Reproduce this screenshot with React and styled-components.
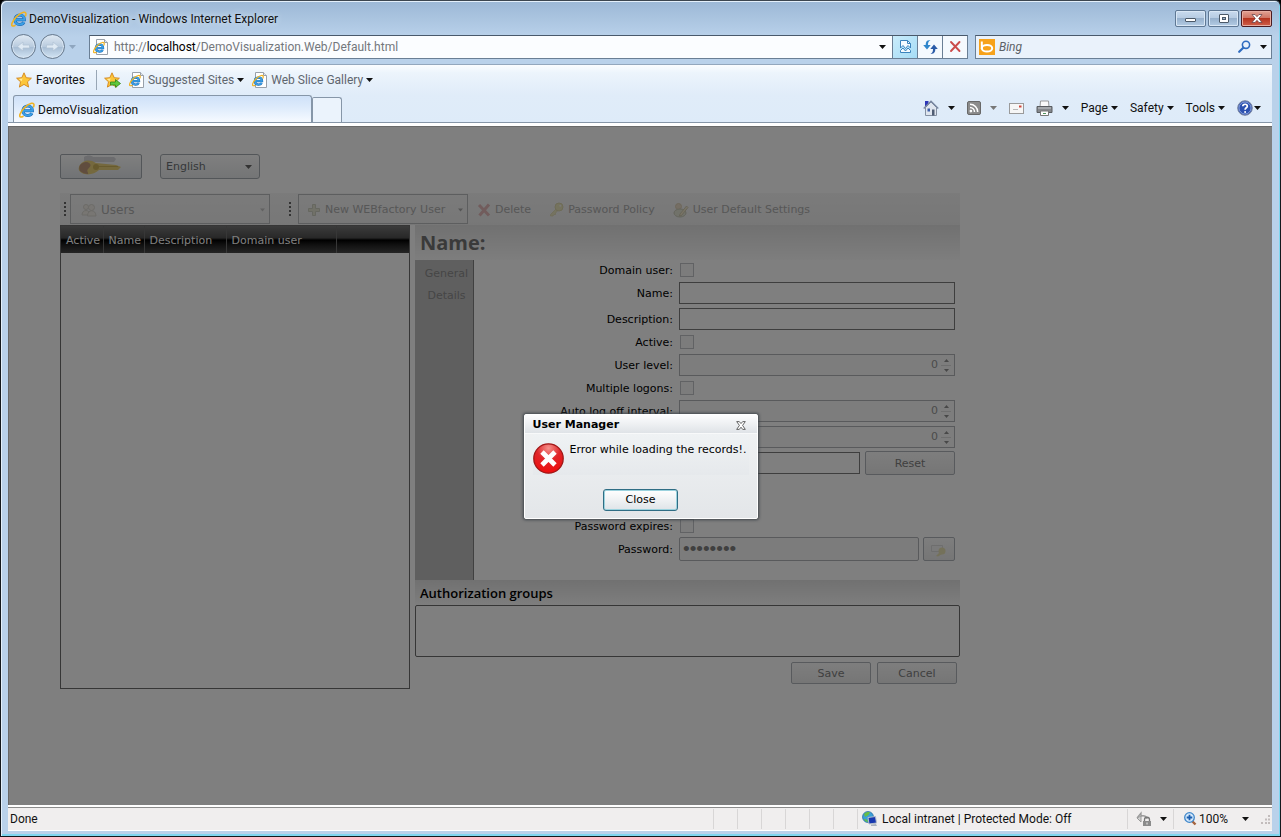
import React, { useState } from 'react';
import styled, { createGlobalStyle, css } from 'styled-components';

const GlobalStyle = createGlobalStyle`
    * {
        box-sizing: border-box;
    }
    body {
        margin: 0;
        background: #000;
    }
    button, input, select {
        font: inherit;
        color: inherit;
        margin: 0;
        padding: 0;
    }
    a {
        color: inherit;
        text-decoration: none;
    }
`;

const appFont = '"DejaVu Sans", Verdana, sans-serif';
const headingFont = '"Open Sans", "Trebuchet MS", sans-serif';

/* ---------- browser window ---------- */

const BrowserWindow = styled.div`
    display: flex;
    flex-direction: column;
    min-height: 100vh;
    padding: 0 8px 6px 7px;
    border: 1px solid #14181d;
    border-top-color: #3c4650;
    border-radius: 6px 6px 0 0;
    background: linear-gradient(#9cb8d6 0, #b9d1ea 36px, #b9d1ea 100%);
    box-shadow: inset 1px 1px 0 #e4f0fb, inset -1px -2px 0 #7fd6ee;
    font: 12px/16px Roboto, "Segoe UI", sans-serif;
    color: #111;
`;

const TitleBar = styled.header`
    display: flex;
    align-items: center;
    gap: 2px;
    height: 32px;
    padding: 3px 0 0 3px;
`;

const TitleText = styled.span`
    flex: 1;
    text-shadow: 0 0 6px #e8f2fc;
`;

const WindowButton = styled.button`
    display: flex;
    align-items: center;
    justify-content: center;
    width: 31px;
    height: 17px;
    border: 1px solid #5f7894;
    border-radius: 2px;
    background: linear-gradient(#c9dbee 0, #b6cbe2 48%, #97b1cd 50%, #b4cce4 100%);
    box-shadow: inset 0 0 0 1px #d9e7f5;

    ${({ $close }) => $close && css`
        border-color: #4b1b20;
        background: linear-gradient(#e2a395 0, #cf7262 48%, #b5341f 50%, #d0604a 100%);
        box-shadow: inset 0 0 0 1px #e7aca0;
    `}
`;

const AddressRow = styled.div`
    display: flex;
    align-items: center;
    height: 31px;
    padding: 0 0 4px 3px;
`;

const NavButton = styled.button`
    display: flex;
    align-items: center;
    justify-content: center;
    width: 25px;
    height: 25px;
    margin-right: 4px;
    border: 1px solid #66788c;
    border-radius: 50%;
    background: linear-gradient(#dfe9f3 0, #b9cbde 50%, #a6bcd3 52%, #d2e4f4 100%);
    box-shadow: inset 0 0 0 1px #d8e5f2;
`;

const PlainButton = styled.button`
    display: inline-flex;
    align-items: center;
    justify-content: center;
    gap: 3px;
    border: 0;
    background: none;
`;

const AddressBox = styled.div`
    display: flex;
    flex: 1;
    align-items: center;
    height: 24px;
    margin: 0 7px 0 13px;
    padding-left: 3px;
    border: 1px solid #6a7f95;
    border-top-color: #49596b;
    background: #fbfdff;
`;

const Url = styled.a`
    flex: 1;
    padding-left: 5px;
    color: #73777c;

    b {
        color: #000;
        font-weight: 400;
    }
`;

const AddressButton = styled.button`
    display: flex;
    align-items: center;
    justify-content: center;
    width: 25px;
    height: 22px;
    border: 0;
    border-left: 1px solid #6a7f95;
    background: ${({ $active }) => ($active ? 'linear-gradient(135deg, #c9ecfb, #a5dcf6)' : '#f4f9fe')};
`;

const HistoryButton = styled(PlainButton)`
    width: 20px;
`;

const SearchBox = styled.label`
    display: flex;
    flex: 0 1 297px;
    align-items: center;
    gap: 4px;
    height: 24px;
    padding: 0 4px 0 3px;
    border: 1px solid #6a7f95;
    border-top-color: #49596b;
    background: #eaf2fb;
`;

const SearchInput = styled.input`
    flex: 1;
    min-width: 0;
    border: 0;
    outline: 0;
    background: none;

    &::placeholder {
        color: #5c6166;
        font-style: italic;
        opacity: 1;
    }
`;

const SearchMenu = styled(PlainButton)`
    margin-left: 5px;
`;

const Bars = styled.div`
    border-top: 1px solid #93a7bd;
    background: linear-gradient(#fbfdff 0, #ecf4fc 8px, #e0ecf9 30px, #deebf9 100%);
`;

const FavoritesBar = styled.nav`
    display: flex;
    align-items: center;
    height: 30px;
    padding: 0 0 0 8px;
    color: #5f666e;
`;

const FavLink = styled.a`
    display: flex;
    align-items: center;
    gap: 3px;
    margin-right: 8px;
`;

const FavoritesButton = styled(PlainButton)`
    height: 20px;
    padding-right: 11px;
    margin-right: 7px;
    border-right: 1px solid #98a6b5;
    color: #111;
`;

const TabRow = styled.div`
    display: flex;
    align-items: flex-end;
    justify-content: space-between;
    height: 28px;
    padding-left: 5px;
    border-bottom: 1px solid #8696a8;
`;

const Tabs = styled.div`
    display: flex;
    flex: 1;
    align-items: flex-end;
    min-width: 0;
    height: 28px;
`;

const Tab = styled.button`
    display: flex;
    flex: 0 1 299px;
    align-items: center;
    gap: 3px;
    height: 27px;
    padding: 2px 5px 0;
    border: 1px solid #8696a8;
    border-bottom: 0;
    border-radius: 3px 3px 0 0;
    background: linear-gradient(#cfe1f8, #dceafb 40%, #f6faff);
`;

const NewTab = styled.button`
    width: 30px;
    height: 25px;
    border: 1px solid #8696a8;
    border-bottom: 0;
    border-radius: 2px 3px 0 0;
    background: #ebf3fc;
`;

const CommandBar = styled.div`
    display: flex;
    align-items: center;
    gap: 12px;
    height: 28px;
    padding-right: 11px;
`;

const IconMenu = styled(PlainButton)`
    gap: 9px;
`;

const HelpMenu = styled(PlainButton)`
    gap: 1px;
`;

/* ---------- page ---------- */

const Page = styled.main`
    position: relative;
    flex: 1;
    margin-top: 3px;
    padding: 26px 51px 40px;
    border: 1px solid #696969;
    border-width: 1px 0 0 1px;
    background: #fff;
    font: 11px/14px ${appFont};
    color: #000;
    box-shadow: 0 -3px 0 #fff;
`;

const Manager = styled.div`
    width: 100%;
    max-width: 900px;
`;

const TopControls = styled.div`
    display: flex;
    align-items: center;
    gap: 18px;
    height: 26px;
    margin-bottom: 14px;
`;

const KeyButton = styled.button`
    display: flex;
    justify-content: center;
    width: 82px;
    height: 25px;
    border: 1px solid #a6adb2;
    border-radius: 2px;
    background: linear-gradient(#fff, #e2e6ea);
`;

const SelectBox = styled.div`
    position: relative;

    svg {
        position: absolute;
        top: 11px;
        right: 8px;
        pointer-events: none;
    }
`;

const LanguageSelect = styled.select`
    appearance: none;
    width: 100px;
    height: 25px;
    padding: 1px 5px 0;
    border: 1px solid #a6adb2;
    border-radius: 3px;
    background: linear-gradient(#fff, #e8eaec);
    color: #6c7174;
`;

const ToolBar = styled.div`
    display: flex;
    align-items: center;
    height: 32px;
    background: linear-gradient(#f6f6f6, #efefef);
    color: #aeaeae;
`;

const ToolGrip = styled.span`
    width: 2px;
    height: 14px;
    margin: 0 ${({ $wide }) => ($wide ? '7px' : '4px')} 0 4px;
    background: repeating-linear-gradient(#666 0, #666 2px, transparent 2px, transparent 4px);
`;

const ToolDropdown = styled.button`
    display: flex;
    align-items: center;
    gap: 4px;
    width: ${({ $width }) => $width};
    height: 30px;
    padding: 1px 4px 0 ${({ $inset }) => $inset || '8px'};
    border: 1px solid #bbbdbf;
    background: none;
    font-size: ${({ $large }) => ($large ? '12px' : '11px')};

    span {
        flex: 1;
        text-align: left;
        white-space: nowrap;
    }
`;

const ToolGap = styled.span`
    width: 15px;
`;

const ToolButton = styled.button`
    display: flex;
    align-items: center;
    gap: 4px;
    margin-left: 9px;
    padding: 1px 9px 0 0;
    border: 0;
    background: none;
    white-space: nowrap;
`;

const Workspace = styled.div`
    display: grid;
    grid-template-columns: 350px 1fr;
    gap: 5px;
`;

const UserList = styled.section`
    min-height: 464px;
    border: 1px solid #6c6c6c;
    background: #fff;
`;

const UserTable = styled.table`
    width: 100%;
    table-layout: fixed;
    border-collapse: collapse;

    th {
        height: 27px;
        padding: 2px 0 0 5px;
        border: solid #6f6f6f;
        border-width: 0 1px 0 0;
        color: #fff;
        font-weight: 400;
        text-align: left;
        white-space: nowrap;
    }
    th:last-child {
        border-right: 0;
    }
    thead {
        background: linear-gradient(#777 0, #505050 44%, #000 52%, #222 70%, #4a4a4a 100%);
    }
`;

const Details = styled.section`
    display: flex;
    flex-direction: column;
    min-width: 0;
`;

const NameHeading = styled.h1`
    height: 35px;
    margin: 0;
    padding: 0 5px;
    background: linear-gradient(#e2e2e2, #fcfcfc);
    color: #757575;
    font: 700 20px/35px ${headingFont};
`;

const GroupHeading = styled.h2`
    height: 25px;
    margin: 0;
    padding: 2px 5px 0;
    background: linear-gradient(#e2e2e2, #fcfcfc);
    font: 600 13px/23px ${headingFont};
`;

const DetailsBody = styled.div`
    display: flex;
    min-height: 320px;
`;

const SideTabs = styled.nav`
    display: flex;
    flex-direction: column;
    width: 59px;
    padding-top: 3px;
    border-right: 1px solid #808080;
    background: #bfbfbf;
`;

const SideTab = styled.button`
    height: 22px;
    padding-left: 5px;
    border: 0;
    background: none;
    color: #8c8c8c;
`;

const Form = styled.form`
    flex: 1;
    min-width: 0;
    padding-right: 5px;
`;

const FormRow = styled.div`
    display: flex;
    align-items: center;
    height: ${({ $check }) => ($check ? '20px' : '26px')};
    margin-top: ${({ $spaced }) => ($spaced ? '40px' : '0')};
`;

const RowLabel = styled.label`
    width: 199px;
    margin-right: 6px;
    padding-top: 1px;
    text-align: right;
    white-space: nowrap;
`;

const CheckBox = styled.input`
    appearance: none;
    width: 14px;
    height: 14px;
    margin-left: 1px;
    border: 1px solid #c2c5c8;
    background: #f8f8f8;
`;

const TextBox = styled.input`
    flex: 1;
    min-width: 0;
    height: ${({ $soft }) => ($soft ? '24px' : '22px')};
    padding: 0 3px;
    border: 1px solid ${({ $soft }) => ($soft ? '#b2b5b8' : '#7c7c7c')};
    border-radius: ${({ $soft }) => ($soft ? '2px' : '0')};
    background: ${({ $soft }) => ($soft ? '#f8f8f8' : '#fff')};
    color: #000;
    outline: 0;

    &[type='password'] {
        color: #808080;
        font: 19px "Liberation Sans", Arial, sans-serif;
    }
`;

const SpinBox = styled.div`
    display: flex;
    flex: 1;
    align-items: center;
    height: 22px;
    padding-right: 3px;
    border: 1px solid #b2b5b8;
    background: #fbfbfb;
`;

const SpinInput = styled.input`
    flex: 1;
    min-width: 0;
    border: 0;
    background: none;
    color: #969696;
    text-align: right;
    appearance: textfield;
    outline: 0;

    &::-webkit-inner-spin-button {
        appearance: none;
    }
`;

const SpinArrows = styled.div`
    display: flex;
    flex-direction: column;
    margin-left: 3px;
`;

const SpinArrow = styled.button`
    display: flex;
    align-items: center;
    justify-content: center;
    width: 10px;
    height: 9px;
    border: 0;
    background: none;

    & + & {
        border-top: 1px solid #ddd;
    }
`;

const SoftButton = styled.button`
    display: flex;
    align-items: center;
    justify-content: center;
    width: ${({ $width }) => $width};
    height: ${({ $tall }) => ($tall ? '24px' : '22px')};
    padding-top: 1px;
    border: 1px solid #b0b5ba;
    border-radius: 2px;
    background: linear-gradient(#fcfcfc, #ececec);
    color: #808080;
`;

const InlineButton = styled(SoftButton)`
    margin-left: ${({ $gap }) => $gap};
`;

const GroupBox = styled.div`
    height: 52px;
    border: 1px solid #6c6c6c;
    border-radius: 2px;
    background: #fff;
`;

const Actions = styled.div`
    display: flex;
    justify-content: flex-end;
    gap: 6px;
    padding: 5px 3px 0;
`;

/* ---------- message box ---------- */

const Overlay = styled.div`
    position: absolute;
    inset: 0;
    display: flex;
    align-items: center;
    justify-content: center;
    background: rgba(0, 0, 0, 0.5);
`;

const Dialog = styled.section`
    width: 234px;
    border: 1px solid #fff;
    border-radius: 2px;
    background: linear-gradient(#f2f4f5, #e3e6e9);
    box-shadow: 0 0 3px 1px #3e454b;
`;

const DialogTitle = styled.div`
    display: flex;
    align-items: center;
    justify-content: space-between;
    height: 19px;
    padding: 3px 11px 0 8px;
    border-bottom: 1px solid #f8f9fa;
    background: linear-gradient(#fdfdfe, #dfe3e7);

    h2 {
        margin: 0;
        font-size: 11px;
    }
`;

const DialogBody = styled.div`
    display: flex;
    gap: 6px;
    height: 41px;
    margin: 0 8px;
    padding-top: 9px;
    background: linear-gradient(#eff2f4, #e6e9ec);

    p {
        margin: 0;
        white-space: nowrap;
    }
    svg {
        flex: none;
    }
`;

const DialogFooter = styled.div`
    display: flex;
    justify-content: center;
    padding: 14px 0 7px;
`;

const CloseButton = styled.button`
    width: 75px;
    height: 22px;
    padding-top: 1px;
    border: 1px solid #2f6d84;
    border-radius: 3px;
    background: linear-gradient(#fff, #dfe4e8);
    box-shadow: inset 0 0 0 1px #9bd2de;
`;

/* ---------- status bar ---------- */

const StatusBar = styled.footer`
    display: flex;
    align-items: center;
    height: 23px;
    margin-top: 2px;
    padding: 0 2px 0 2px;
    border-top: 1px solid #8c8c8c;
    background: #f0eeee;
    box-shadow: 0 -2px 0 #fff, 0 1px 0 #fff;
`;

const StatusText = styled.span`
    flex: 1;
`;

const StatusCell = styled.span`
    display: flex;
    align-items: center;
    gap: ${({ $gap }) => $gap || '4px'};
    width: ${({ $width }) => $width || '24px'};
    height: 20px;
    padding-left: ${({ $inset }) => $inset || '0'};
    border-left: 1px solid #d8d6d6;
    white-space: nowrap;
`;

const ZoomMenu = styled(PlainButton)`
    margin-left: 12px;
`;

/* ---------- icons ---------- */

const Caret = ({ color = '#111', width = 7 }) => (
    <svg width={width} height="4" viewBox="0 0 7 4" fill={color}>
        <path d="M0 0h7L3.500 4z" />
    </svg>
);

const IeMark = () => (
    <>
        <path d="M4.200 8.700h9.200C13.400 5.800 11.500 4 8.800 4 6 4 3.900 6 3.900 8.800s2 4.700 4.900 4.700c1.900 0 3.400-.8 4.200-2.200" fill="none" stroke="#1766b4" strokeWidth="3" />
        <path d="M4.200 8.700h9.200C13.400 5.800 11.500 4 8.800 4 6 4 3.900 6 3.900 8.800s2 4.700 4.900 4.700c1.900 0 3.400-.8 4.200-2.200" fill="none" stroke="#3ba0e6" strokeWidth="1.900" />
        <path d="M14.600 4.800c1-2.600-.1-4-2.200-3.500C8.300 2.300 2.700 7.500 1 12.200c-.8 2.600.4 3.500 3 2.300" fill="none" stroke="#f0b323" strokeWidth="1.600" strokeLinecap="round" />
    </>
);

const IeIcon = () => (
    <svg width="16" height="16" viewBox="0 0 16 16"><IeMark /></svg>
);

const IePageIcon = () => (
    <svg width="16" height="16" viewBox="0 0 16 16">
        <path d="M3.500.5h8l3 3v12h-11z" fill="#fff" stroke="#98a0aa" />
        <path d="M11.500.5v3h3" fill="#e3e8ee" stroke="#98a0aa" />
        <g transform="translate(0 2.500) scale(.75)"><IeMark /></g>
    </svg>
);

const StarIcon = ({ withArrow }) => (
    <svg width="17" height="16" viewBox="0 0 17 16">
        <path d="M8 .8l2.200 4.900 5.200.5-3.900 3.600 1.100 5.300L8 12.400l-4.600 2.700 1.100-5.300L.6 6.200l5.200-.5z" fill="#fcc63a" stroke="#d2841a" strokeWidth=".9" />
        <path d="M8 2.600L6.500 6.500 2.800 7l2.800 2.200z" fill="#ffe99a" />
        {withArrow && <path d="M6.500 10h5V7.600L16.500 11.500l-5 3.900V13h-5z" fill="#5fc83c" stroke="#2e8418" strokeWidth=".8" />}
    </svg>
);

const NavArrow = ({ flip }) => (
    <svg width="15" height="13" viewBox="0 0 15 13">
        <path d={flip ? 'M1.500 5h6.500V2l5.500 4.500L8 11V8H1.500z' : 'M13.500 5H7V2L1.500 6.500 7 11V8h6.500z'} fill="#dfeaf4" stroke="#b3c4d5" strokeWidth=".8" />
    </svg>
);

const MinimizeIcon = () => (
    <svg width="12" height="11" viewBox="0 0 12 11"><rect x=".5" y="5.500" width="10" height="3" rx=".5" fill="#fff" stroke="#4b5968" /></svg>
);

const MaximizeIcon = () => (
    <svg width="12" height="11" viewBox="0 0 12 11">
        <rect x="1.500" y="1.500" width="9" height="8" rx=".5" fill="#fff" stroke="#4b5968" />
        <rect x="4.500" y="4.500" width="3" height="2" fill="#9fb4ca" stroke="#4b5968" />
    </svg>
);

const WindowCloseIcon = () => (
    <svg width="12" height="11" viewBox="0 0 12 11">
        <path d="M1 1.500h3l2 2.200 2-2.200h3L7.700 5.500 11 9.500H8L6 7.300 4 9.500H1l3.300-4z" fill="#fff" stroke="#5b3a40" strokeWidth=".7" />
    </svg>
);

const BrokenPageIcon = () => (
    <svg width="13" height="15" viewBox="0 0 13 15" fill="#f4fbff" stroke="#3b83bd">
        <path d="M1.500 9V1.500h7l3 3V9L9 6.500 6.500 9.500 4 6.500z" />
        <path d="M8.500 1.500v3h3" fill="none" />
        <path d="M1.500 11.500L4 9l2.500 3L9 9l2.500 2.500v2h-10z" />
    </svg>
);

const RefreshIcon = () => (
    <svg width="15" height="14" viewBox="0 0 15 14">
        <path d="M7.500.5C5.500.7 5 2.500 5 5h2.700L4 9.500.2 5h2.500C2.500 1.500 4.500-.3 7.500.5z" fill="#2f86cc" />
        <path d="M7.500 13.500c2-.2 2.500-2 2.500-4.500H7.300L11 4.500 14.800 9h-2.500c.2 3.500-1.800 5.300-4.800 4.500z" fill="#2a5ba8" />
    </svg>
);

const StopIcon = () => (
    <svg width="13" height="13" viewBox="0 0 13 13" stroke="#cb4b4b" strokeWidth="1.900" strokeLinecap="round">
        <path d="M2 2l8.500 9M10.500 2L2 11" />
    </svg>
);

const BingIcon = () => (
    <svg width="16" height="16" viewBox="0 0 16 16">
        <rect width="16" height="16" fill="#f7a21b" />
        <path d="M2.800 2.500v7.500" stroke="#fff" strokeWidth="2" />
        <ellipse cx="8" cy="9.300" rx="5.200" ry="3.300" fill="none" stroke="#fff" strokeWidth="2" />
    </svg>
);

const MagnifierIcon = () => (
    <svg width="13" height="13" viewBox="0 0 13 13" fill="none" stroke="#2f6cc0">
        <circle cx="8" cy="4.800" r="3.600" strokeWidth="1.600" />
        <path d="M5.300 7.700L1.200 11.800" strokeWidth="2.200" strokeLinecap="round" />
    </svg>
);

const HomeIcon = () => (
    <svg width="16" height="16" viewBox="0 0 16 16">
        <path d="M2 1h3.500v5H2z" fill="#2c36b8" />
        <path d="M2.500 7.500L8 2l5.500 5.500v8h-11z" fill="#dfe5ee" stroke="#8590a2" />
        <path d="M.7 8.600L8 1.300l7.300 7.300" fill="none" stroke="#7886a0" strokeWidth="1.400" />
        <path d="M4.500 8.500h2.500v3H4.500z" fill="#3d5fa8" />
        <path d="M9 9.500h2.500v6H9z" fill="#4f5d74" />
    </svg>
);

const FeedIcon = () => (
    <svg width="14" height="14" viewBox="0 0 14 14" fill="none" stroke="#fff" strokeWidth="1.500">
        <rect x=".5" y=".5" width="13" height="13" rx="1.500" fill="#8b8b8b" stroke="#686868" strokeWidth="1" />
        <path d="M3 6.500a4.500 4.500 0 0 1 4.500 4.500M3 3.300A7.700 7.700 0 0 1 10.700 11" />
        <circle cx="3.900" cy="10.100" r=".6" />
    </svg>
);

const MailIcon = () => (
    <svg width="15" height="11" viewBox="0 0 15 11">
        <rect x=".5" y=".5" width="14" height="10" fill="#f6f6f6" stroke="#9a9a9a" />
        <path d="M10 2.500h2.500v2H10z" fill="#d0453a" />
        <path d="M4 6.500h5" stroke="#b8b8b8" />
    </svg>
);

const PrinterIcon = () => (
    <svg width="17" height="16" viewBox="0 0 17 16">
        <path d="M4.500 1h8l.5 6H4z" fill="#fafafa" stroke="#999" />
        <path d="M1 6.500h15v6H1z" fill="#85888c" stroke="#5a5d61" />
        <path d="M2 8h13" stroke="#c5c8cb" />
        <path d="M4.500 11h8v4.500h-8z" fill="#fff" stroke="#777" />
        <path d="M7 13.500h3" stroke="#4f9460" />
    </svg>
);

const HelpIcon = () => (
    <svg width="16" height="16" viewBox="0 0 16 16">
        <circle cx="8" cy="8" r="7.300" fill="#2c51b0" stroke="#7b86a0" />
        <circle cx="8" cy="8" r="6" fill="none" stroke="#a9bbea" strokeWidth=".7" />
        <path d="M5.800 6.300C5.800 3.500 10.300 3.700 10.300 6.200 10.300 7.800 8.100 7.800 8.100 9.700" fill="none" stroke="#fff" strokeWidth="1.700" />
        <circle cx="8.100" cy="12" r="1" fill="#fff" />
    </svg>
);

const KeysIcon = () => (
    <svg width="48" height="22" viewBox="0 0 48 22">
        <path d="M7 2c3-2 7-2 9 0h21l2 2-2 3H16C13 9 9 8 7 6z" fill="#d8d8dc" />
        <path d="M3 10c3-5 10-6 16-2l20 2 5 2-3 3H22c-4 4-12 6-17 3-4-2-4-5-2-8z" fill="#ead27c" />
        <path d="M3 10c3-3 7-4 9-2 3 2 1 4-1 6s1 4 0 5c-3 0-6-1-8-3-1-2-1-4 0-6z" fill="#c09a7c" />
        <circle cx="19" cy="12" r="3" fill="#cdb35a" />
        <path d="M22 11.500h19" stroke="#d0b65c" />
    </svg>
);

const UsersIcon = () => (
    <svg width="16" height="16" viewBox="0 0 16 16" fill="#f1ede6" stroke="#d8d6d0">
        <circle cx="5" cy="5" r="2.500" />
        <path d="M1 13c0-6 8-6 8 0z" />
        <circle cx="10.500" cy="5.500" r="3" />
        <path d="M6.500 14c0-7 8.500-7 8.500 0z" />
    </svg>
);

const PlusIcon = () => (
    <svg width="14" height="14" viewBox="0 0 14 14">
        <path d="M5.500 1.500h3v4h4v3h-4v4h-3v-4h-4v-3h4z" fill="#e2e2d0" stroke="#cccec0" />
    </svg>
);

const DeleteIcon = () => (
    <svg width="14" height="14" viewBox="0 0 14 14" stroke="#e3b8b8" strokeWidth="3">
        <path d="M2 2l10 10.500M12 1.500L2.500 12.500" />
    </svg>
);

const KeyIcon = () => (
    <svg width="15" height="15" viewBox="0 0 15 15">
        <path d="M7 7L1.500 12.500v1.500H4l1-1.500h1.500V11l2-2z" fill="#ebe6c0" stroke="#ddd7ae" strokeWidth=".7" />
        <circle cx="10" cy="5" r="4" fill="#ebe6bc" stroke="#ddd7ae" />
        <circle cx="11.300" cy="3.700" r="1" fill="#f5f5f0" />
    </svg>
);

const UserSettingsIcon = () => (
    <svg width="16" height="16" viewBox="0 0 16 16">
        <circle cx="5.500" cy="4.500" r="3" fill="#eadcc8" stroke="#dccfb6" />
        <ellipse cx="7" cy="11" rx="6" ry="4" fill="#e3e4d4" stroke="#c8cab8" />
        <path d="M7 12l6.500-8 1.500 1.500-6.500 8-2 .5z" fill="#f1e9cc" stroke="#c4bba4" strokeWidth=".7" />
    </svg>
);

const FieldKeyIcon = () => (
    <svg width="18" height="14" viewBox="0 0 18 14">
        <path d="M1.500 2.500h11v6h-11z" fill="#f4f4f4" stroke="#ddd" />
        <circle cx="12" cy="8" r="3.500" fill="#e9e2b4" />
        <path d="M10 9l-4 4 2 .5L12 11z" fill="#e9e2b4" />
    </svg>
);

const DialogCloseIcon = () => (
    <svg width="10" height="9" viewBox="0 0 10 9">
        <path d="M.7.6h2.600L5 2.600 6.700.6h2.600L6.600 4.400l2.700 4H6.700L5 6.200 3.300 8.400H.7l2.700-4z" fill="#fff" stroke="#555" strokeWidth=".9" />
    </svg>
);

const ErrorIcon = () => (
    <svg width="31" height="31" viewBox="0 0 31 31">
        <defs>
            <radialGradient id="errorRed" cx=".5" cy=".15" r=".8">
                <stop offset="0" stopColor="#f5928c" />
                <stop offset=".5" stopColor="#e0262a" />
                <stop offset="1" stopColor="#ee1010" />
            </radialGradient>
        </defs>
        <circle cx="15.500" cy="15.500" r="14.700" fill="url(#errorRed)" stroke="#a01818" strokeWidth="1.300" />
        <path d="M9 9l13 13M22 9L9 22" stroke="#fff" strokeWidth="4.800" />
    </svg>
);

const ZoneIcon = () => (
    <svg width="16" height="16" viewBox="0 0 16 16">
        <circle cx="6" cy="6" r="5.500" fill="#3b9fd8" stroke="#23679c" strokeWidth=".7" />
        <path d="M2 3c2-2 5-2.500 6-1.500L6.500 4 3 6zM2 8l3 .5 1 2.500C4 11 2 9.500 2 8z" fill="#67bd45" />
        <path d="M6 6.500l7.500-1 1 6.500-7.500 1z" fill="#1838b0" stroke="#b7bfca" />
        <path d="M9 13.500l5-.5 1 2H9z" fill="#aab2bd" />
    </svg>
);

const ProtectedIcon = () => (
    <svg width="16" height="16" viewBox="0 0 16 16">
        <path d="M1 7l4-5v3c4-1 6 1 6 3" fill="none" stroke="#999" strokeWidth="1.300" />
        <path d="M1 7l4 4V5z" fill="#d2d2d2" stroke="#999" />
        <path d="M8.500 10V8.500c0-3 5-3 5 0V10" fill="none" stroke="#777" strokeWidth="1.300" />
        <path d="M7 10h8v5H7z" fill="#8b8b8b" />
        <path d="M11 11.500v2" stroke="#eee" />
    </svg>
);

const ZoomIcon = () => (
    <svg width="13" height="14" viewBox="0 0 13 14">
        <path d="M8 9l3.500 3.500" stroke="#a4633e" strokeWidth="2.400" />
        <circle cx="5.500" cy="5.500" r="4.800" fill="#d5e9fb" stroke="#3e86c9" strokeWidth="1.300" />
        <path d="M5.500 2.700v5.600M2.700 5.500h5.600" stroke="#1c5fb0" strokeWidth="1.800" />
    </svg>
);

const SizeGrip = () => (
    <svg width="9" height="9" viewBox="0 0 9 9" fill="#c2bcbc">
        <path d="M7 0h2v2H7zM4 3.500h2v2H4zM7 3.500h2v2H7zM0 7h2v2H0zM4 7h2v2H4zM7 7h2v2H7z" />
    </svg>
);

/* ---------- composition ---------- */

const CheckRow = ({ id, label, spaced }) => (
    <FormRow $check $spaced={spaced}>
        <RowLabel htmlFor={id}>{label}</RowLabel>
        <CheckBox id={id} type="checkbox" />
    </FormRow>
);

const TextRow = ({ id, label }) => (
    <FormRow>
        <RowLabel htmlFor={id}>{label}</RowLabel>
        <TextBox id={id} type="text" />
    </FormRow>
);

const SpinRow = ({ id, label, name }) => {
    const [value, setValue] = useState(0);

    return (
        <FormRow>
            <RowLabel htmlFor={id}>{label}</RowLabel>
            <SpinBox>
                <SpinInput
                    id={id}
                    type="number"
                    aria-label={name}
                    value={value}
                    onChange={e => setValue(Number(e.target.value))}
                />
                <SpinArrows>
                    <SpinArrow type="button" aria-label="Increase" onClick={() => setValue(value + 1)}>
                        <svg width="5" height="3" viewBox="0 0 5 3" fill="#909090"><path d="M2.500 0L5 3H0z" /></svg>
                    </SpinArrow>
                    <SpinArrow type="button" aria-label="Decrease" onClick={() => setValue(value - 1)}>
                        <svg width="5" height="3" viewBox="0 0 5 3" fill="#909090"><path d="M2.500 3L5 0H0z" /></svg>
                    </SpinArrow>
                </SpinArrows>
            </SpinBox>
        </FormRow>
    );
};

const BrowserChrome = () => (
    <>
        <TitleBar>
            <IeIcon />
            <TitleText>DemoVisualization - Windows Internet Explorer</TitleText>
            <WindowButton aria-label="Minimize"><MinimizeIcon /></WindowButton>
            <WindowButton aria-label="Maximize"><MaximizeIcon /></WindowButton>
            <WindowButton $close aria-label="Close window"><WindowCloseIcon /></WindowButton>
        </TitleBar>
        <AddressRow>
            <NavButton aria-label="Back"><NavArrow /></NavButton>
            <NavButton aria-label="Forward"><NavArrow flip /></NavButton>
            <PlainButton aria-label="Recent pages"><Caret color="#8fa6bf" /></PlainButton>
            <AddressBox>
                <IePageIcon />
                <Url href="#">http://<b>localhost</b>/DemoVisualization.Web/Default.html</Url>
                <HistoryButton aria-label="Address history"><Caret /></HistoryButton>
                <AddressButton $active aria-label="Compatibility view"><BrokenPageIcon /></AddressButton>
                <AddressButton aria-label="Refresh"><RefreshIcon /></AddressButton>
                <AddressButton aria-label="Stop"><StopIcon /></AddressButton>
            </AddressBox>
            <SearchBox>
                <BingIcon />
                <SearchInput type="text" placeholder="Bing" aria-label="Search" />
                <MagnifierIcon />
                <SearchMenu aria-label="Search options"><Caret /></SearchMenu>
            </SearchBox>
        </AddressRow>
        <Bars>
            <FavoritesBar>
                <FavoritesButton><StarIcon />Favorites</FavoritesButton>
                <FavLink href="#" aria-label="Add to favorites bar"><StarIcon withArrow /></FavLink>
                <FavLink href="#"><IePageIcon />Suggested Sites <Caret /></FavLink>
                <FavLink href="#"><IePageIcon />Web Slice Gallery <Caret /></FavLink>
            </FavoritesBar>
            <TabRow>
                <Tabs>
                    <Tab><IeIcon />DemoVisualization</Tab>
                    <NewTab aria-label="New tab" />
                </Tabs>
                <CommandBar>
                    <IconMenu aria-label="Home"><HomeIcon /><Caret /></IconMenu>
                    <IconMenu aria-label="Feeds"><FeedIcon /><Caret color="#777" /></IconMenu>
                    <IconMenu aria-label="Read mail"><MailIcon /></IconMenu>
                    <IconMenu aria-label="Print"><PrinterIcon /><Caret /></IconMenu>
                    <PlainButton>Page<Caret /></PlainButton>
                    <PlainButton>Safety<Caret /></PlainButton>
                    <PlainButton>Tools<Caret /></PlainButton>
                    <HelpMenu aria-label="Help"><HelpIcon /><Caret /></HelpMenu>
                </CommandBar>
            </TabRow>
        </Bars>
    </>
);

const UserManager = () => (
    <Manager>
        <TopControls>
            <KeyButton aria-label="Log on"><KeysIcon /></KeyButton>
            <SelectBox>
                <LanguageSelect aria-label="Language">
                    <option>English</option>
                </LanguageSelect>
                <Caret color="#666" />
            </SelectBox>
        </TopControls>
        <ToolBar>
            <ToolGrip />
            <ToolDropdown $large $width="200px" $inset="10px">
                <UsersIcon /><span>Users</span><Caret color="#c4c4c4" width={5} />
            </ToolDropdown>
            <ToolGap />
            <ToolGrip $wide />
            <ToolDropdown $width="170px">
                <PlusIcon /><span>New WEBfactory User</span><Caret color="#aaa" width={5} />
            </ToolDropdown>
            <ToolButton><DeleteIcon />Delete</ToolButton>
            <ToolButton><KeyIcon />Password Policy</ToolButton>
            <ToolButton><UserSettingsIcon />User Default Settings</ToolButton>
        </ToolBar>
        <Workspace>
            <UserList>
                <UserTable>
                    <colgroup>
                        <col width="42" />
                        <col width="41" />
                        <col width="82" />
                        <col width="110" />
                        <col />
                    </colgroup>
                    <thead>
                        <tr>
                            <th>Active</th>
                            <th>Name</th>
                            <th>Description</th>
                            <th>Domain user</th>
                            <th />
                        </tr>
                    </thead>
                </UserTable>
            </UserList>
            <Details>
                <NameHeading>Name:</NameHeading>
                <DetailsBody>
                    <SideTabs>
                        <SideTab>General</SideTab>
                        <SideTab>Details</SideTab>
                    </SideTabs>
                    <Form>
                        <CheckRow id="domain" label="Domain user:" />
                        <TextRow id="name" label="Name:" />
                        <TextRow id="description" label="Description:" />
                        <CheckRow id="active" label="Active:" />
                        <SpinRow id="level" label="User level:" />
                        <CheckRow id="multiple" label="Multiple logons:" />
                        <SpinRow id="interval" label="Auto log off interval:" />
                        <SpinRow id="count" name="Count" />
                        <FormRow>
                            <RowLabel htmlFor="code" />
                            <TextBox id="code" type="text" aria-label="Code" />
                            <InlineButton type="button" $tall $width="90px" $gap="5px">Reset</InlineButton>
                        </FormRow>
                        <CheckRow id="expires" label="Password expires:" spaced />
                        <FormRow>
                            <RowLabel htmlFor="password">Password:</RowLabel>
                            <TextBox $soft id="password" type="password" defaultValue="password" />
                            <InlineButton type="button" $tall $width="32px" $gap="4px" aria-label="Change password">
                                <FieldKeyIcon />
                            </InlineButton>
                        </FormRow>
                    </Form>
                </DetailsBody>
                <GroupHeading>Authorization groups</GroupHeading>
                <GroupBox />
                <Actions>
                    <SoftButton $width="80px">Save</SoftButton>
                    <SoftButton $width="80px">Cancel</SoftButton>
                </Actions>
            </Details>
        </Workspace>
    </Manager>
);

const MessageBox = () => (
    <Overlay>
        <Dialog role="dialog" aria-label="User Manager">
            <DialogTitle>
                <h2>User Manager</h2>
                <PlainButton aria-label="Close message"><DialogCloseIcon /></PlainButton>
            </DialogTitle>
            <DialogBody>
                <ErrorIcon />
                <p>Error while loading the records!.</p>
            </DialogBody>
            <DialogFooter>
                <CloseButton>Close</CloseButton>
            </DialogFooter>
        </Dialog>
    </Overlay>
);

const App = () => (
    <>
        <GlobalStyle />
        <BrowserWindow>
            <BrowserChrome />
            <Page>
                <UserManager />
                <MessageBox />
            </Page>
            <StatusBar>
                <StatusText>Done</StatusText>
                <StatusCell />
                <StatusCell />
                <StatusCell />
                <StatusCell />
                <StatusCell />
                <StatusCell />
                <StatusCell $width="270px" $inset="4px"><ZoneIcon />Local intranet | Protected Mode: Off</StatusCell>
                <StatusCell $width="46px" $inset="8px" $gap="8px"><ProtectedIcon /><Caret /></StatusCell>
                <StatusCell $width="88px" $inset="10px" $gap="2px">
                    <ZoomIcon />100%
                    <ZoomMenu aria-label="Zoom level"><Caret /></ZoomMenu>
                </StatusCell>
                <SizeGrip />
            </StatusBar>
        </BrowserWindow>
    </>
);

export default App;
